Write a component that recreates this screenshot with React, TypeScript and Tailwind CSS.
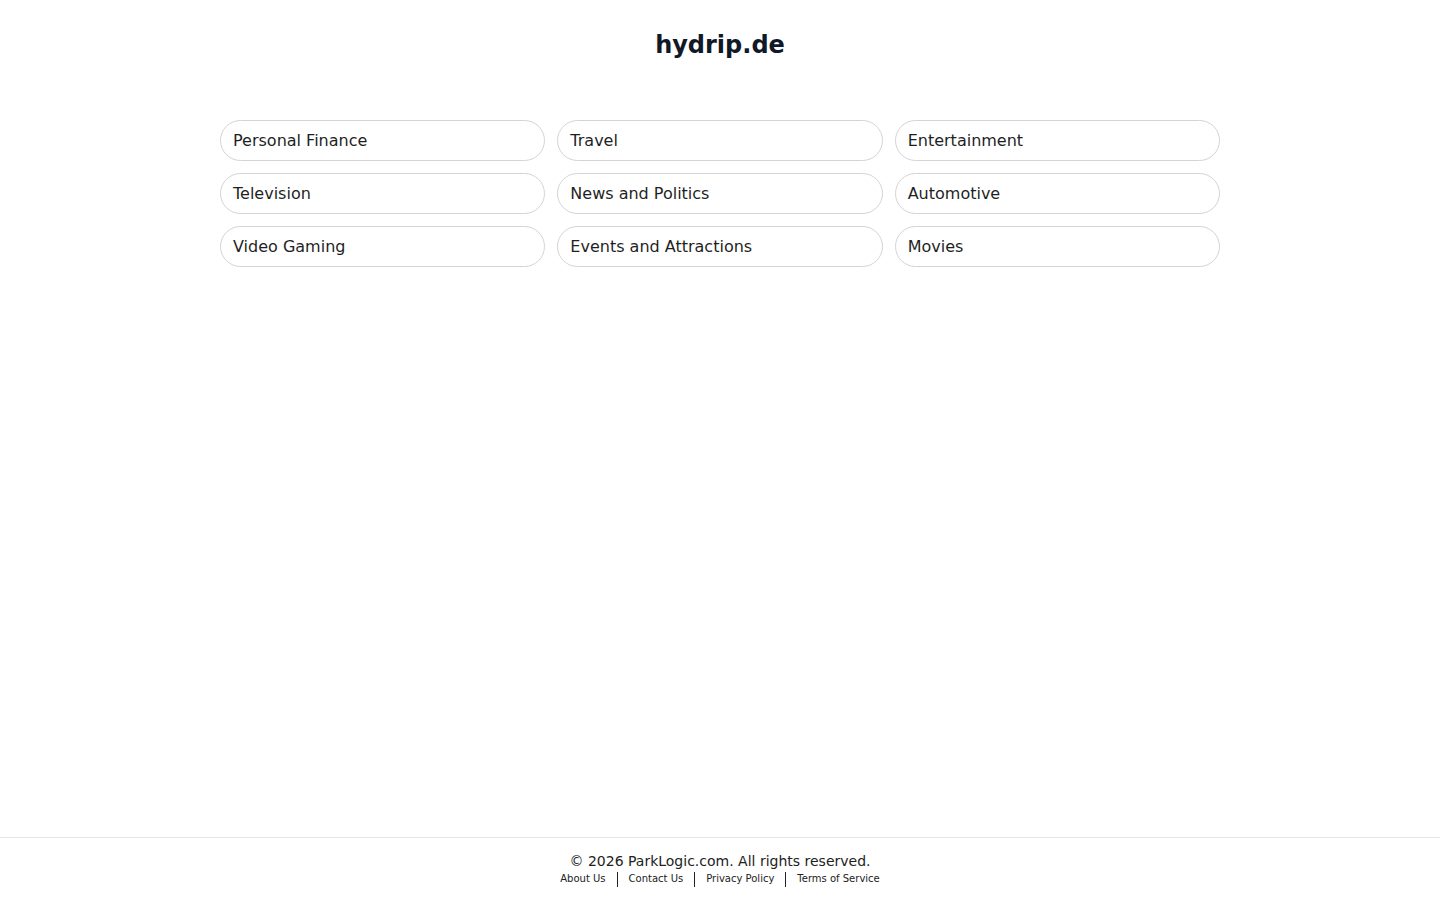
const topics = [
  "Personal Finance",
  "Travel",
  "Entertainment",
  "Television",
  "News and Politics",
  "Automotive",
  "Video Gaming",
  "Events and Attractions",
  "Movies",
];

const links = ["About Us", "Contact Us", "Privacy Policy", "Terms of Service"];

export default function App() {
  return (
    <div
      className="min-h-screen flex flex-col bg-white text-[#1a1a1a]"
      style={{ fontFamily: '"DejaVu Sans", Verdana, sans-serif' }}
    >
      <main className="flex-1">
        <h1 className="pt-[30px] text-center text-[24px] leading-[30px] font-bold text-[#111827]">
          hydrip.de
        </h1>

        {/* Related searches */}
        <div className="mx-auto mt-[60px] w-[1000px] grid grid-cols-3 gap-x-3 gap-y-3">
          {topics.map((t) => (
            <a
              key={t}
              href="#"
              className="h-[41px] flex items-center rounded-full border border-[#d4d4d4] px-[12px] text-[16px] text-[#1f1f1f] hover:bg-gray-50"
            >
              {t}
            </a>
          ))}
        </div>
      </main>

      <footer className="border-t border-[#e5e5e5] pt-[14px] pb-[13px] text-center">
        <p className="text-[14px] leading-[18px] text-[#222]">
          © 2026 ParkLogic.com. All rights reserved.
        </p>
        <div className="mt-[1px] flex items-center justify-center text-[10px] leading-[16px] text-[#222]">
          {links.map((l, i) => (
            <div key={l} className="flex items-center">
              {i > 0 && <span className="mx-[11px] h-[15px] w-[1px] bg-[#222]" />}
              <a href="#">{l}</a>
            </div>
          ))}
        </div>
      </footer>
    </div>
  );
}
